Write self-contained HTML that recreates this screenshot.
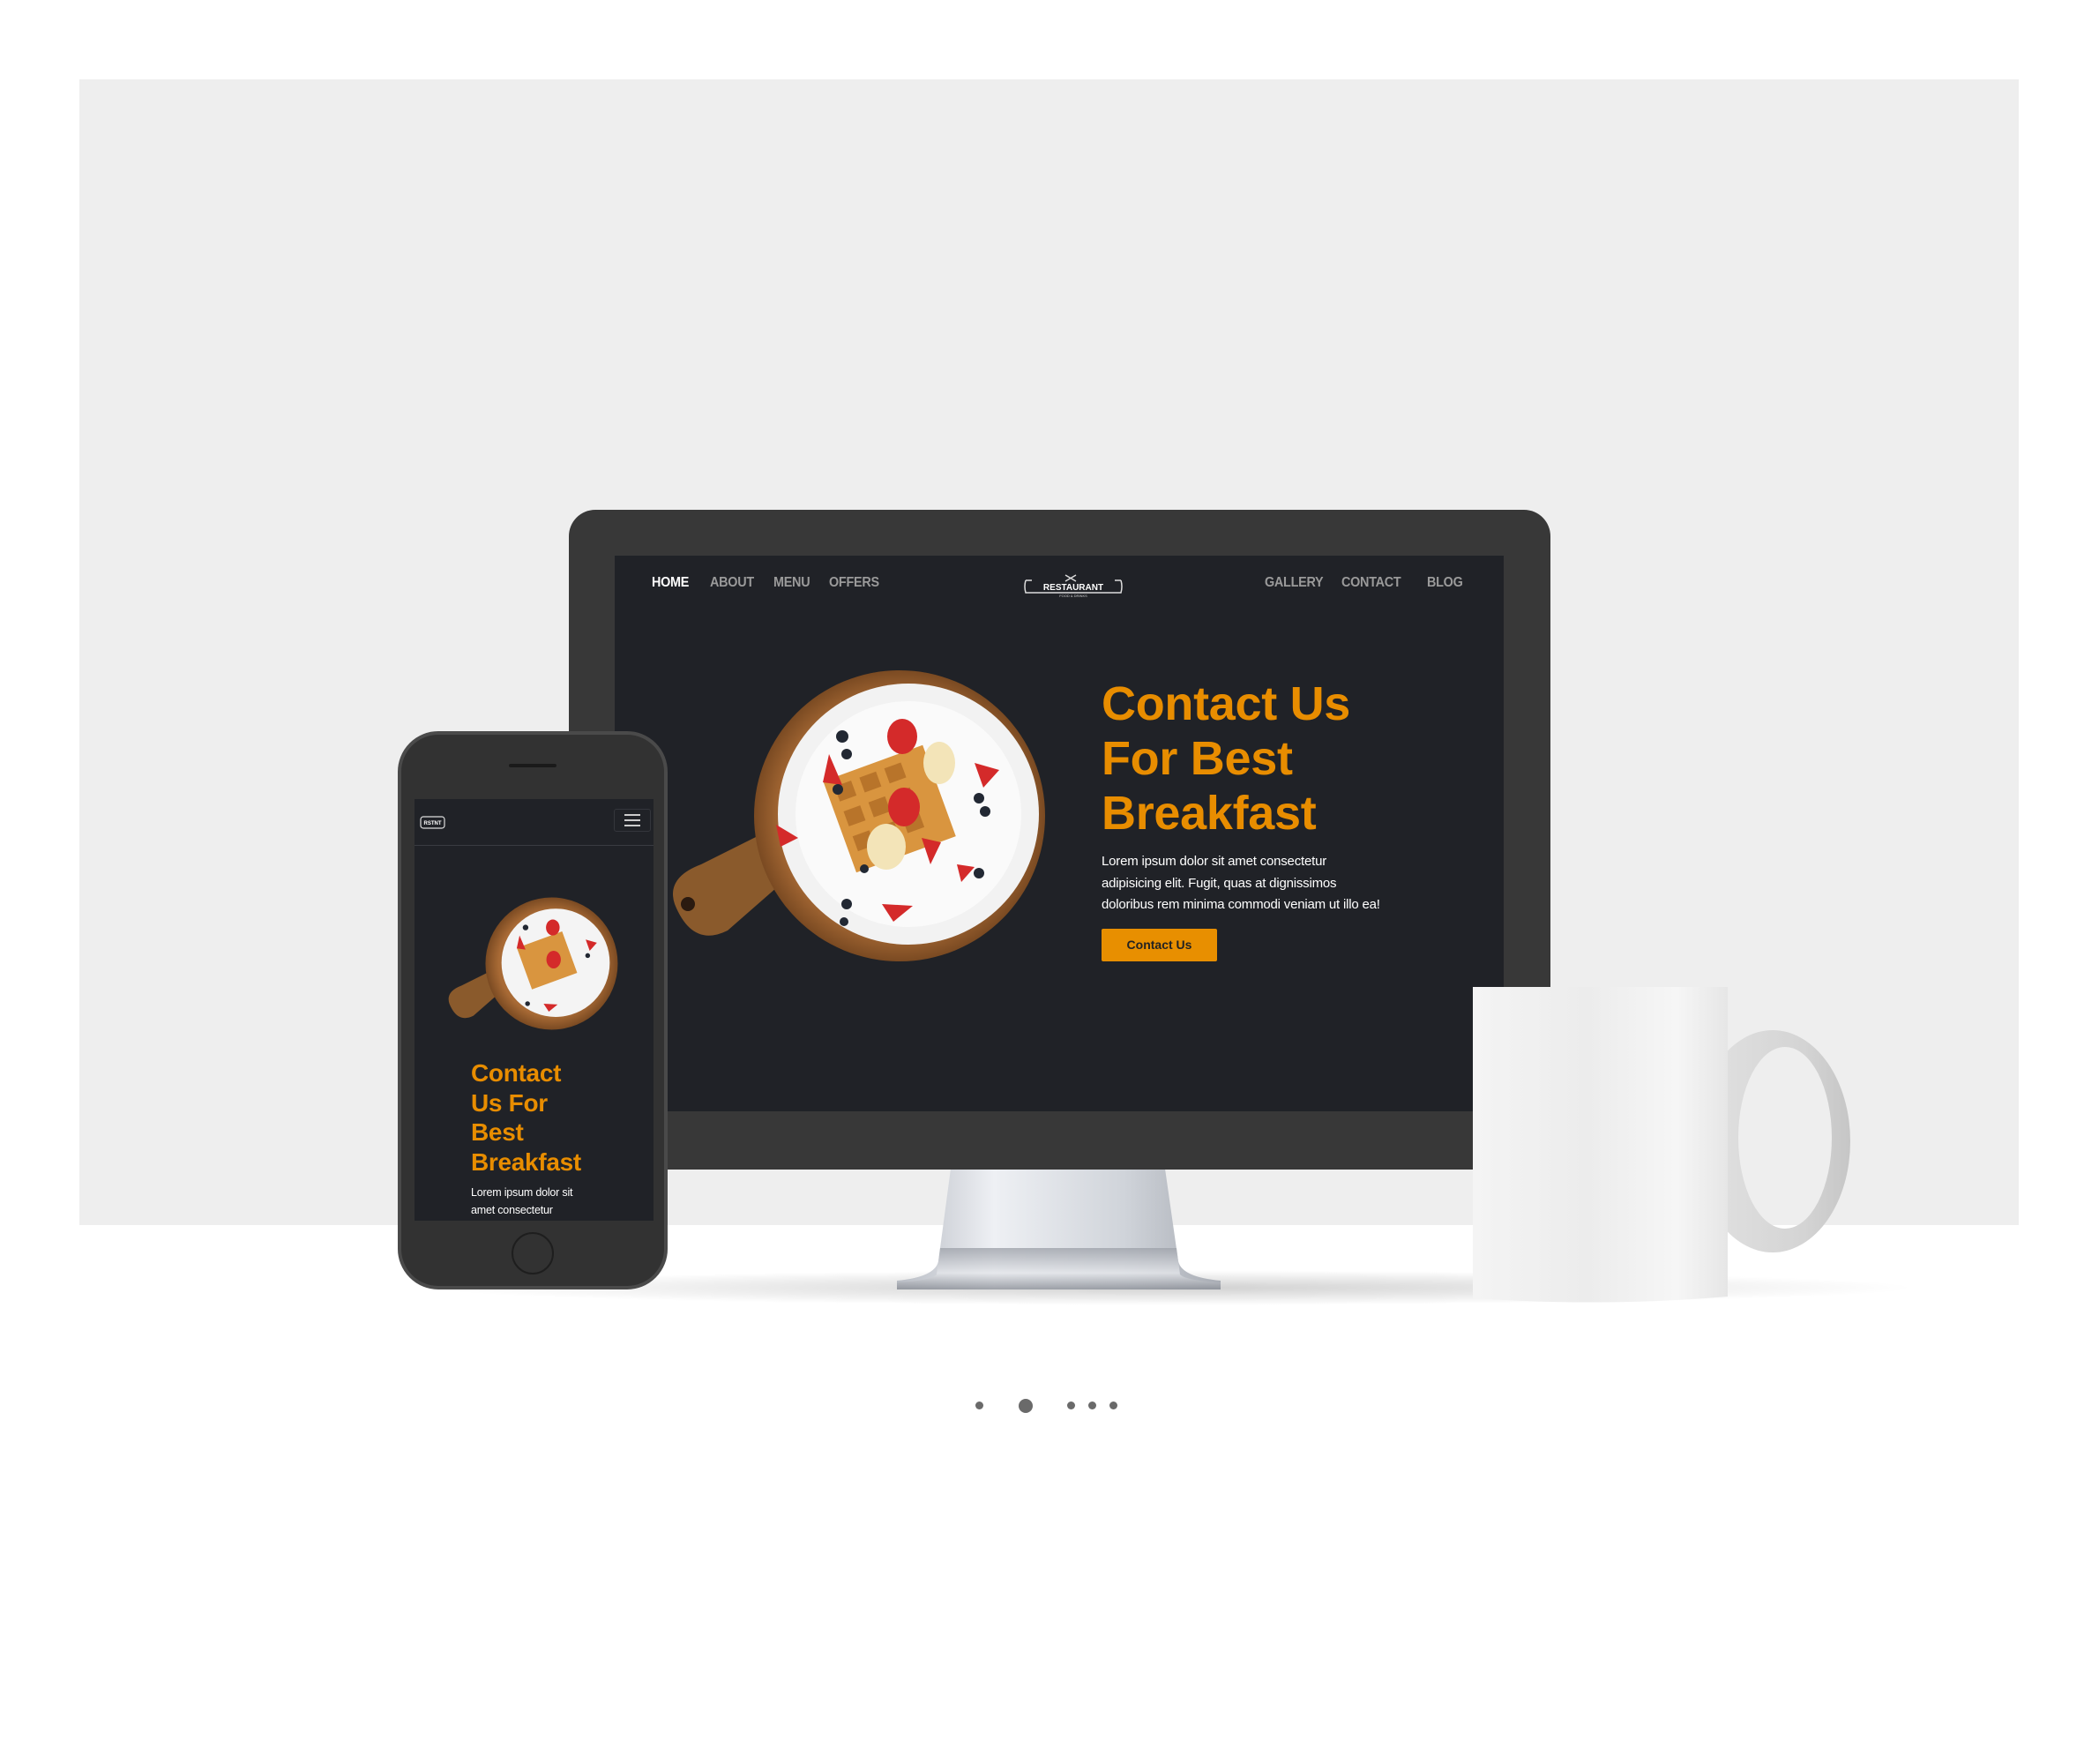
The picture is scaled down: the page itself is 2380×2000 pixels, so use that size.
<!DOCTYPE html>
<html><head><meta charset="utf-8"><style>
*{margin:0;padding:0;box-sizing:border-box}
body{width:2380px;height:2000px;background:#fff;position:relative;overflow:hidden;font-family:"Liberation Sans",sans-serif}
.abs{position:absolute}
.nav{position:absolute;top:652px;font-weight:bold;font-size:16px;color:#9a9a9a;letter-spacing:-0.3px;transform:scaleX(0.9);transform-origin:left}
.h1{color:#e88d00;font-weight:bold;font-size:54px;letter-spacing:-0.3px;line-height:62px}
.dot{position:absolute;border-radius:50%;background:#6a6a6a}
</style></head><body>
<div class="abs" style="left:90px;top:90px;width:2199px;height:1299px;background:#eeeeee"></div>
<div class="abs" style="left:480px;top:1440px;width:1700px;height:40px;border-radius:50%;background:radial-gradient(ellipse at center,rgba(0,0,0,0.18),rgba(0,0,0,0) 70%)"></div>
<svg class="abs" style="left:1000px;top:1320px" width="400" height="150">
<defs><linearGradient id="st" x1="0" x2="1"><stop offset="0" stop-color="#b8bcc4"/><stop offset="0.3" stop-color="#eef0f4"/><stop offset="0.7" stop-color="#d0d4da"/><stop offset="1" stop-color="#a8acb4"/></linearGradient>
<linearGradient id="st2" x1="0" y1="0" x2="0" y2="1"><stop offset="0" stop-color="#9ea2aa"/><stop offset="0.6" stop-color="#e4e6ea"/><stop offset="1" stop-color="#8a8e96"/></linearGradient></defs>
<path d="M78 5 L321 5 L336 110 Q340 128 384 132 L384 142 L17 142 L17 132 Q60 128 64 110 Z" fill="url(#st)"/>
<path d="M66 95 L334 95 L338 125 Q345 132 384 134 L384 142 L17 142 L17 134 Q56 132 62 125 Z" fill="url(#st2)" opacity="0.8"/>
</svg>
<div class="abs" style="left:645px;top:578px;width:1113px;height:748px;background:#383838;border-radius:30px 30px 0 0"></div>
<div class="abs" style="left:697px;top:630px;width:1008px;height:630px;background:#202227"></div>
<div class="nav" style="left:739px;color:#fff">HOME</div>
<div class="nav" style="left:805px">ABOUT</div>
<div class="nav" style="left:877px">MENU</div>
<div class="nav" style="left:940px">OFFERS</div>
<div class="nav" style="left:1434px">GALLERY</div>
<div class="nav" style="left:1521px">CONTACT</div>
<div class="nav" style="left:1618px">BLOG</div>
<svg class="abs" style="left:1160px;top:650px" width="114" height="30">
<path d="M3 8 L10 8 M104 8 L111 8 M3 8 Q1 15 3 22 L111 22 Q113 15 111 8" fill="none" stroke="#ddd" stroke-width="1.5"/>
<path d="M48 2 L60 9 M60 2 L48 9" stroke="#ddd" stroke-width="1.4"/>
<text x="57" y="19" font-size="10" font-weight="bold" fill="#fff" text-anchor="middle" font-family="Liberation Sans">RESTAURANT</text>
<text x="57" y="27" font-size="4" fill="#ccc" text-anchor="middle" font-family="Liberation Sans">FOOD &amp; DRINKS</text>
</svg>
<svg class="abs" style="left:755px;top:755px" width="440" height="340" viewBox="0 0 440 340">
<defs><radialGradient id="wd" cx="0.5" cy="0.5" r="0.5"><stop offset="0.8" stop-color="#a86a35"/><stop offset="1" stop-color="#7a4a22"/></radialGradient></defs>
<path d="M10 270 Q0 240 40 225 L110 190 L150 230 L70 300 Q30 320 10 270Z" fill="#8a5a2c"/>
<circle cx="25" cy="270" r="8" fill="#2a1a10"/>
<circle cx="265" cy="170" r="165" fill="url(#wd)"/>
<circle cx="275" cy="168" r="148" fill="#f2f2f2"/>
<circle cx="275" cy="168" r="128" fill="#fafafa"/>
<g transform="rotate(-20 260 165)">
<rect x="195" y="105" width="120" height="110" fill="#d9953f"/>
<g fill="#b8742a"><rect x="205" y="115" width="20" height="18"/><rect x="235" y="115" width="20" height="18"/><rect x="265" y="115" width="20" height="18"/><rect x="205" y="145" width="20" height="18"/><rect x="235" y="145" width="20" height="18"/><rect x="265" y="145" width="20" height="18"/><rect x="205" y="175" width="20" height="18"/><rect x="235" y="175" width="20" height="18"/><rect x="265" y="175" width="20" height="18"/></g></g>
<ellipse cx="250" cy="205" rx="22" ry="26" fill="#f3e4b8"/>
<ellipse cx="310" cy="110" rx="18" ry="24" fill="#f3e4b8"/>
<g fill="#d42a2a"><ellipse cx="270" cy="160" rx="18" ry="22"/><ellipse cx="268" cy="80" rx="17" ry="20"/><path d="M185 100 L200 135 L178 132Z"/><path d="M350 110 L378 118 L360 138Z"/><path d="M290 195 L312 200 L300 225Z"/><path d="M245 270 L280 272 L258 290Z"/><path d="M330 225 L350 228 L335 245Z"/><path d="M125 180 L150 195 L130 205Z"/></g>
<g fill="#222833"><circle cx="200" cy="80" r="7"/><circle cx="205" cy="100" r="6"/><circle cx="195" cy="140" r="6"/><circle cx="355" cy="150" r="6"/><circle cx="362" cy="165" r="6"/><circle cx="355" cy="235" r="6"/><circle cx="205" cy="270" r="6"/><circle cx="202" cy="290" r="5"/><circle cx="225" cy="230" r="5"/></g>
</svg>
<div class="abs h1" style="left:1249px;top:767px">Contact Us<br>For Best<br>Breakfast</div>
<div class="abs" style="left:1249px;top:965px;color:#fff;font-size:15px;line-height:24.5px;letter-spacing:-0.2px">Lorem ipsum dolor sit amet consectetur<br>adipisicing elit. Fugit, quas at dignissimos<br>doloribus rem minima commodi veniam ut illo ea!</div>
<div class="abs" style="left:1249px;top:1053px;width:131px;height:37px;background:#e88f00;border-radius:2px;color:#222;font-size:14px;font-weight:bold;text-align:center;line-height:37px">Contact Us</div>
<svg class="abs" style="left:1660px;top:1110px" width="460" height="380">
<defs><linearGradient id="mg" x1="0" x2="1"><stop offset="0" stop-color="#f4f4f4"/><stop offset="0.45" stop-color="#ececec"/><stop offset="0.8" stop-color="#f6f6f6"/><stop offset="1" stop-color="#e6e6e6"/></linearGradient>
<linearGradient id="hg" x1="0" x2="1"><stop offset="0" stop-color="#e2e2e2"/><stop offset="0.7" stop-color="#d4d4d4"/><stop offset="1" stop-color="#c6c6c6"/></linearGradient></defs>
<path fill-rule="evenodd" fill="url(#hg)" d="M262 184 A88 126 0 1 0 438 184 A88 126 0 1 0 262 184 Z M311 180 A53 103 0 1 0 417 180 A53 103 0 1 0 311 180 Z"/>
<path d="M10 9 L299 9 L299 360 Q160 372 10 362Z" fill="url(#mg)"/>
</svg>
<div class="abs" style="left:451px;top:829px;width:306px;height:633px;background:#323232;border:4px solid #4a4a4a;border-radius:46px"></div>
<div class="abs" style="left:577px;top:866px;width:54px;height:4px;background:#1a1a1a;border-radius:2px"></div>
<div class="abs" style="left:470px;top:906px;width:271px;height:478px;background:#202227"></div>
<div class="abs" style="left:470px;top:958px;width:271px;height:1px;background:#3a3c42"></div>
<svg class="abs" style="left:475px;top:920px" width="32" height="24"><rect x="2" y="6" width="27" height="13" rx="3" fill="none" stroke="#ddd" stroke-width="1.2"/><text x="15.5" y="15" font-size="6" fill="#fff" text-anchor="middle" font-weight="bold" font-family="Liberation Sans">RSTNT</text></svg>
<div class="abs" style="left:696px;top:917px;width:42px;height:26px;border:1px solid #34363c;border-radius:3px"></div>
<div class="abs" style="left:708px;top:923px;width:18px;height:2px;background:#ccc;box-shadow:0 6px 0 #ccc,0 12px 0 #ccc"></div>
<svg class="abs" style="left:505px;top:1010px" width="200" height="165" viewBox="0 0 440 340">
<path d="M10 270 Q0 240 40 225 L110 190 L150 230 L70 300 Q30 320 10 270Z" fill="#8a5a2c"/>
<circle cx="265" cy="170" r="165" fill="url(#wd)"/>
<circle cx="275" cy="168" r="135" fill="#f4f4f4"/>
<g transform="rotate(-20 260 165)"><rect x="195" y="105" width="120" height="110" fill="#d9953f"/></g>
<g fill="#d42a2a"><ellipse cx="270" cy="160" rx="18" ry="22"/><ellipse cx="268" cy="80" rx="17" ry="20"/><path d="M185 100 L200 135 L178 132Z"/><path d="M350 110 L378 118 L360 138Z"/><path d="M245 270 L280 272 L258 290Z"/></g>
<g fill="#222833"><circle cx="200" cy="80" r="7"/><circle cx="355" cy="150" r="6"/><circle cx="205" cy="270" r="6"/></g>
</svg>
<div class="abs" style="left:534px;top:1200px;color:#e88d00;font-weight:bold;font-size:28px;line-height:33.5px;letter-spacing:-0.3px">Contact<br>Us For<br>Best<br>Breakfast</div>
<div class="abs" style="left:534px;top:1342px;color:#fff;font-size:12.5px;line-height:20px;letter-spacing:-0.2px">Lorem ipsum dolor sit<br>amet consectetur</div>
<div class="abs" style="left:580px;top:1397px;width:48px;height:48px;border:2px solid #1e1e1e;border-radius:50%"></div>
<div class="dot" style="left:1106px;top:1589px;width:9px;height:9px"></div>
<div class="dot" style="left:1155px;top:1586px;width:16px;height:16px"></div>
<div class="dot" style="left:1210px;top:1589px;width:9px;height:9px"></div>
<div class="dot" style="left:1234px;top:1589px;width:9px;height:9px"></div>
<div class="dot" style="left:1258px;top:1589px;width:9px;height:9px"></div>
</body></html>
